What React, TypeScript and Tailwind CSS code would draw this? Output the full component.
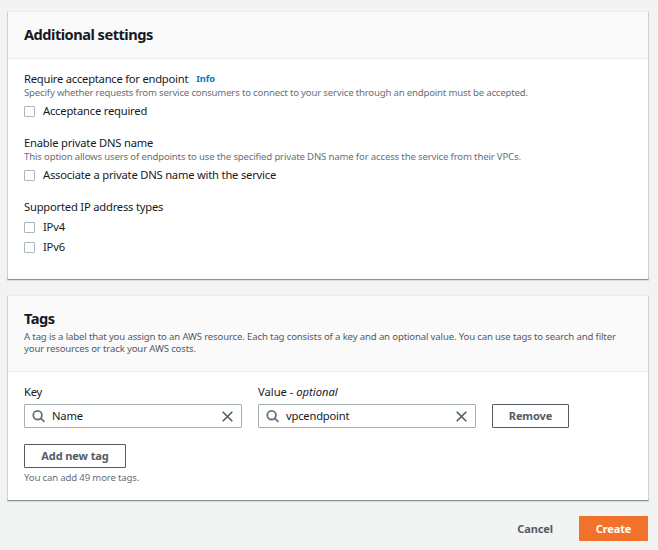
import type { ReactNode } from 'react';

const FONT = "font-['Noto_Sans','Open_Sans',sans-serif]";
const BUTTON = 'h-6 rounded-[1px] border border-[#545b64] text-[11px] font-bold tracking-[-0.1px] text-[#545b64]';

function Panel({ children, className }: { children: ReactNode; className: string }) {
  return (
    <section className={`w-[642px] border border-t-[#eaeded] border-x-[#ccd1d1] border-b-[#879596] bg-white shadow-[0_1px_1px_0_rgba(0,28,36,0.1)] ${className}`}>
      {children}
    </section>
  );
}

function Check({ label }: { label: string }) {
  return (
    <label className="flex h-5 items-center gap-2">
      <span className="size-[11px] shrink-0 rounded-[1px] border border-[#aab7b8] bg-white" />
      <span>{label}</span>
    </label>
  );
}

function TagInput({ value }: { value: string }) {
  return (
    <div className="flex h-6 w-[218px] items-center rounded-[1px] border border-[#a3b1b2] bg-white pr-2 pl-[7px]">
      <svg className="size-[13px]" viewBox="0 0 13 13" fill="none" stroke="#687078" strokeWidth="1.8">
        <circle cx="5.6" cy="5.2" r="4.3" />
        <path d="M8.6 8.2 12.4 11.8" />
      </svg>
      <span className="ml-[7px] flex-1">{value}</span>
      <svg className="size-[11px]" viewBox="0 0 11 11" fill="none" stroke="#545b64" strokeWidth="1.6">
        <path d="M.7.7l9.6 9.6M10.3.7.7 10.3" />
      </svg>
    </div>
  );
}

export default function App() {
  return (
    <main className={`h-[550px] w-[658px] overflow-hidden bg-[#f2f3f3] pt-[11px] pl-[7px] text-[11.2px] leading-4 tracking-[-0.2px] whitespace-nowrap text-[#16191f] ${FONT}`}>
      <Panel className="h-[269px]">
        <header className="flex h-[47px] items-center border-b border-[#eaeded] bg-[#fafafa] px-4 pb-[2px]">
          <h2 className="text-[14.6px] leading-5 font-bold tracking-[-0.5px]">Additional settings</h2>
        </header>
        <div className="px-4 pt-3">
          <div className="flex items-center gap-2">
            <span className="tracking-[-0.23px]">Require acceptance for endpoint</span>
            <a className="text-[9.3px] font-bold tracking-[-0.1px] text-[#0079c4]">Info</a>
          </div>
          <p className="h-[14px] text-[9.6px] leading-3 tracking-[-0.18px] text-[#687078]">Specify whether requests from service consumers to connect to your service through an endpoint must be accepted.</p>
          <Check label="Acceptance required" />
          <div className="mt-[14px]">Enable private DNS name</div>
          <p className="h-[14px] text-[9.6px] leading-3 tracking-[-0.16px] text-[#687078]">This option allows users of endpoints to use the specified private DNS name for access the service from their VPCs.</p>
          <Check label="Associate a private DNS name with the service" />
          <div className="mt-[14px] mb-[2px]">Supported IP address types</div>
          <Check label="IPv4" />
          <Check label="IPv6" />
        </div>
      </Panel>

      <Panel className="mt-[15px] h-[206px]">
        <header className="h-[76px] border-b border-[#eaeded] bg-[#fafafa] px-4 pt-3">
          <h2 className="text-[14.6px] leading-5 font-bold tracking-[-0.5px]">Tags</h2>
          <p className="mt-[3px] text-[9.6px] leading-3 tracking-[-0.15px] text-[#545b64]">
            A tag is a label that you assign to an AWS resource. Each tag consists of a key and an optional value. You can use tags to search and filter
            <br />
            your resources or track your AWS costs.
          </p>
        </header>
        <div className="px-4 pt-3">
          <div className="flex items-end gap-4">
            <div>
              <div className="mb-1">Key</div>
              <TagInput value="Name" />
            </div>
            <div>
              <div className="mb-1 tracking-[0px]">Value - <i>optional</i></div>
              <TagInput value="vpcendpoint" />
            </div>
            <button className={`w-[77px] ${BUTTON}`}>Remove</button>
          </div>
          <button className={`mt-4 block w-[102px] ${BUTTON}`}>Add new tag</button>
          <p className="mt-1 text-[9.6px] leading-3 tracking-[-0.16px] text-[#687078]">You can add 49 more tags.</p>
        </div>
      </Panel>

      <footer className="mt-[15px] flex w-[641px] items-center justify-end text-[11px] font-bold tracking-[-0.1px]">
        <button className="mr-[26px] text-[#545b64]">Cancel</button>
        <button className="h-[25px] w-[69px] rounded-[1px] bg-[#f3722b] text-white">Create</button>
      </footer>
    </main>
  );
}
